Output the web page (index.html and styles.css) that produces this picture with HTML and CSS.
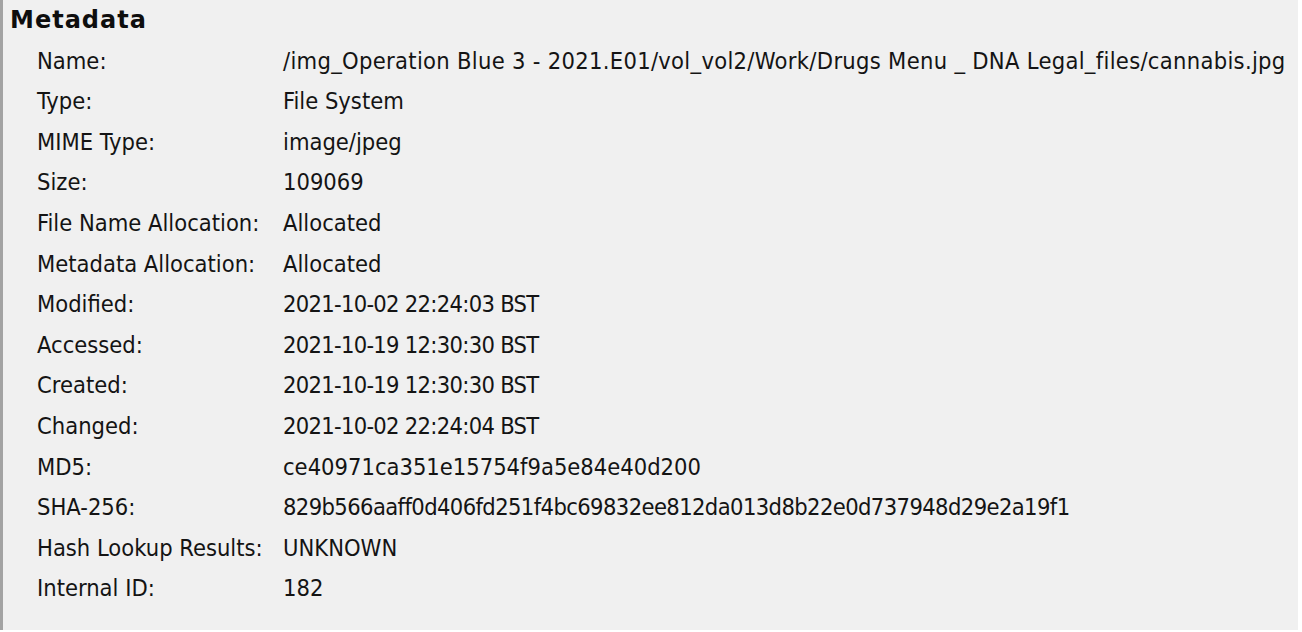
FILE: index.html
```html
<!DOCTYPE html>
<html>
<head>
<meta charset="utf-8">
<link rel="stylesheet" href="styles.css">
</head>
<body>
<div class="panel">
  <div class="heading">Metadata</div>
  <div class="grid">
    <div class="label">Name:</div><div class="value path">/img_Operation Blue 3 - 2021.E01/vol_vol2/Work/Drugs Menu _ DNA Legal_files/cannabis.jpg</div>
    <div class="label">Type:</div><div class="value">File System</div>
    <div class="label">MIME Type:</div><div class="value">image/jpeg</div>
    <div class="label">Size:</div><div class="value">109069</div>
    <div class="label">File Name Allocation:</div><div class="value">Allocated</div>
    <div class="label">Metadata Allocation:</div><div class="value">Allocated</div>
    <div class="label">Modified:</div><div class="value date">2021-10-02 22:24:03 BST</div>
    <div class="label">Accessed:</div><div class="value date">2021-10-19 12:30:30 BST</div>
    <div class="label">Created:</div><div class="value date">2021-10-19 12:30:30 BST</div>
    <div class="label">Changed:</div><div class="value date">2021-10-02 22:24:04 BST</div>
    <div class="label">MD5:</div><div class="value">ce40971ca351e15754f9a5e84e40d200</div>
    <div class="label">SHA-256:</div><div class="value hash">829b566aaff0d406fd251f4bc69832ee812da013d8b22e0d737948d29e2a19f1</div>
    <div class="label">Hash Lookup Results:</div><div class="value">UNKNOWN</div>
    <div class="label">Internal ID:</div><div class="value">182</div>
  </div>
</div>
</body>
</html>
```
FILE: styles.css
```css
html, body {
  margin: 0;
  padding: 0;
  background: #ffffff;
}
body {
  width: 1302px;
  height: 632px;
  overflow: hidden;
}
.panel {
  box-sizing: border-box;
  margin: 1px 4px 0 0;
  height: 630px;
  background: #f0f0f0;
  border-left: 3px solid #a3a3a3;
  font-family: "DejaVu Sans Condensed", "DejaVu Sans", sans-serif;
  font-size: 23.5px;
  color: #141414;
  line-height: 40.6px;
  padding-left: 7px;
  white-space: nowrap;
}
.heading {
  font-family: "DejaVu Sans", sans-serif;
  font-size: 24px;
  font-weight: bold;
  letter-spacing: 1px;
  color: #0e0e0e;
  margin-top: -1px;
}
.grid {
  display: grid;
  grid-template-columns: 246px 1fr;
  padding-left: 27px;
}
.path {
  letter-spacing: 0.3px;
}
.date {
  letter-spacing: -0.7px;
}
.hash {
  letter-spacing: -0.6px;
}
```
